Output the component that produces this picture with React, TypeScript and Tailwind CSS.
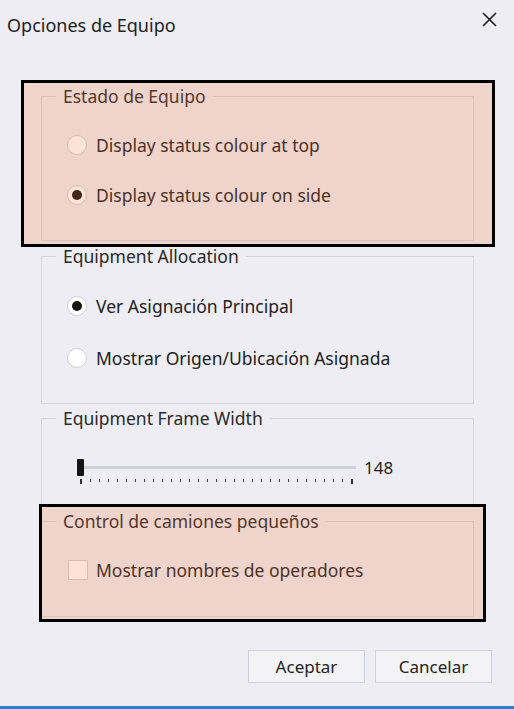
import React from "react";

function Radio({ checked, label }: { checked?: boolean; label: string }) {
  return (
    <div className="flex items-center h-[24px]">
      <span className="flex items-center justify-center w-[20px] h-[20px] rounded-full bg-white border border-[#cfcfd9]">
        {checked && <span className="block w-[10px] h-[10px] rounded-full bg-[#151515]" />}
      </span>
      <span className="ml-[9px] text-[17.5px] leading-[22px]">{label}</span>
    </div>
  );
}

function Group({
  title,
  className,
  children,
}: {
  title: string;
  className: string;
  children: React.ReactNode;
}) {
  return (
    <fieldset className={`w-[433px] border border-[#d5d5df] p-0 m-0 ${className}`}>
      <legend className="ml-[14px] px-[7px] text-[17.5px] leading-[22px] text-[#2a2a2a]">{title}</legend>
      {children}
    </fieldset>
  );
}

export default function App() {
  const ticks = Array.from({ length: 31 }, (_, i) => i);
  return (
    <div className="relative w-[514px] h-[709px] bg-[#eeedf3] text-[#222222] overflow-hidden flex flex-col font-['Noto_Sans','Open_Sans',sans-serif]">
      <div className="flex items-center justify-between h-[50px] pl-[7px] pr-[17px]">
        <span className="text-[18px] leading-[24px] text-[#222222]">Opciones de Equipo</span>
        <svg width="15" height="15" viewBox="0 0 15 15" className="mb-[11px]">
          <path d="M1 1 L14 14 M14 1 L1 14" stroke="#1a1a1a" strokeWidth="1.6" fill="none" />
        </svg>
      </div>

      <div className="flex flex-col pl-[41px] mt-[35px]">
        <Group title="Estado de Equipo" className="">
          <div className="flex flex-col gap-[26px] pl-[25px] pt-[26px] pb-[33px]">
            <Radio label="Display status colour at top" />
            <Radio checked label="Display status colour on side" />
          </div>
        </Group>

        <Group title="Equipment Allocation" className="mt-[4px]">
          <div className="flex flex-col gap-[28px] pl-[25px] pt-[27px] pb-[33px]">
            <Radio checked label="Ver Asignación Principal" />
            <Radio label="Mostrar Origen/Ubicación Asignada" />
          </div>
        </Group>

        <Group title="Equipment Frame Width" className="mt-[3px]">
          <div className="flex items-start pl-[35px] pt-[30px] pb-[20px]">
            <div className="flex flex-col w-[279px]">
              <div className="flex items-center h-[17px]">
                <span className="block w-[7px] h-[17px] bg-[#151515] rounded-[1px]" />
                <span className="block flex-1 h-[3px] bg-[#cfd0da]" />
              </div>
              <div className="flex justify-between items-start h-[6px] mt-[3px] pl-[3px] pr-[3px]">
                {ticks.map((i) => (
                  <span
                    key={i}
                    className={
                      i === 0 || i === ticks.length - 1
                        ? "block w-[2px] h-[5px] bg-[#333333]"
                        : "block w-[1px] h-[3px] bg-[#444444]"
                    }
                  />
                ))}
              </div>
            </div>
            <span className="ml-[8px] text-[17px] leading-[17px] text-[#222222]">148</span>
          </div>
        </Group>

        <Group title="Control de camiones pequeños" className="mt-[4px]">
          <div className="flex items-center pl-[26px] pt-[28px] pb-[36px]">
            <span className="block w-[20px] h-[20px] bg-white border border-[#cfcfd9]" />
            <span className="ml-[8px] text-[17.5px] leading-[20px]">Mostrar nombres de operadores</span>
          </div>
        </Group>
      </div>

      <div className="flex justify-end gap-[10px] pr-[22px] mt-[33px]">
        <button className="w-[117px] h-[33px] pt-[1px] bg-[#f3f3f6] border border-[#d0d0d9] text-[17px] text-[#222222]">
          Aceptar
        </button>
        <button className="w-[117px] h-[33px] pt-[1px] bg-[#f3f3f6] border border-[#d0d0d9] text-[17px] text-[#222222]">
          Cancelar
        </button>
      </div>

      <div className="mt-auto h-[3px] bg-[#2a7fd4]" />

      <div className="pointer-events-none absolute left-[21px] top-[80px] w-[474px] h-[167px] border-[3px] border-black bg-[rgba(247,117,50,0.2)]" />
      <div className="pointer-events-none absolute left-[39px] top-[504px] w-[447px] h-[118px] border-[3px] border-black bg-[rgba(247,117,50,0.2)]" />
    </div>
  );
}
